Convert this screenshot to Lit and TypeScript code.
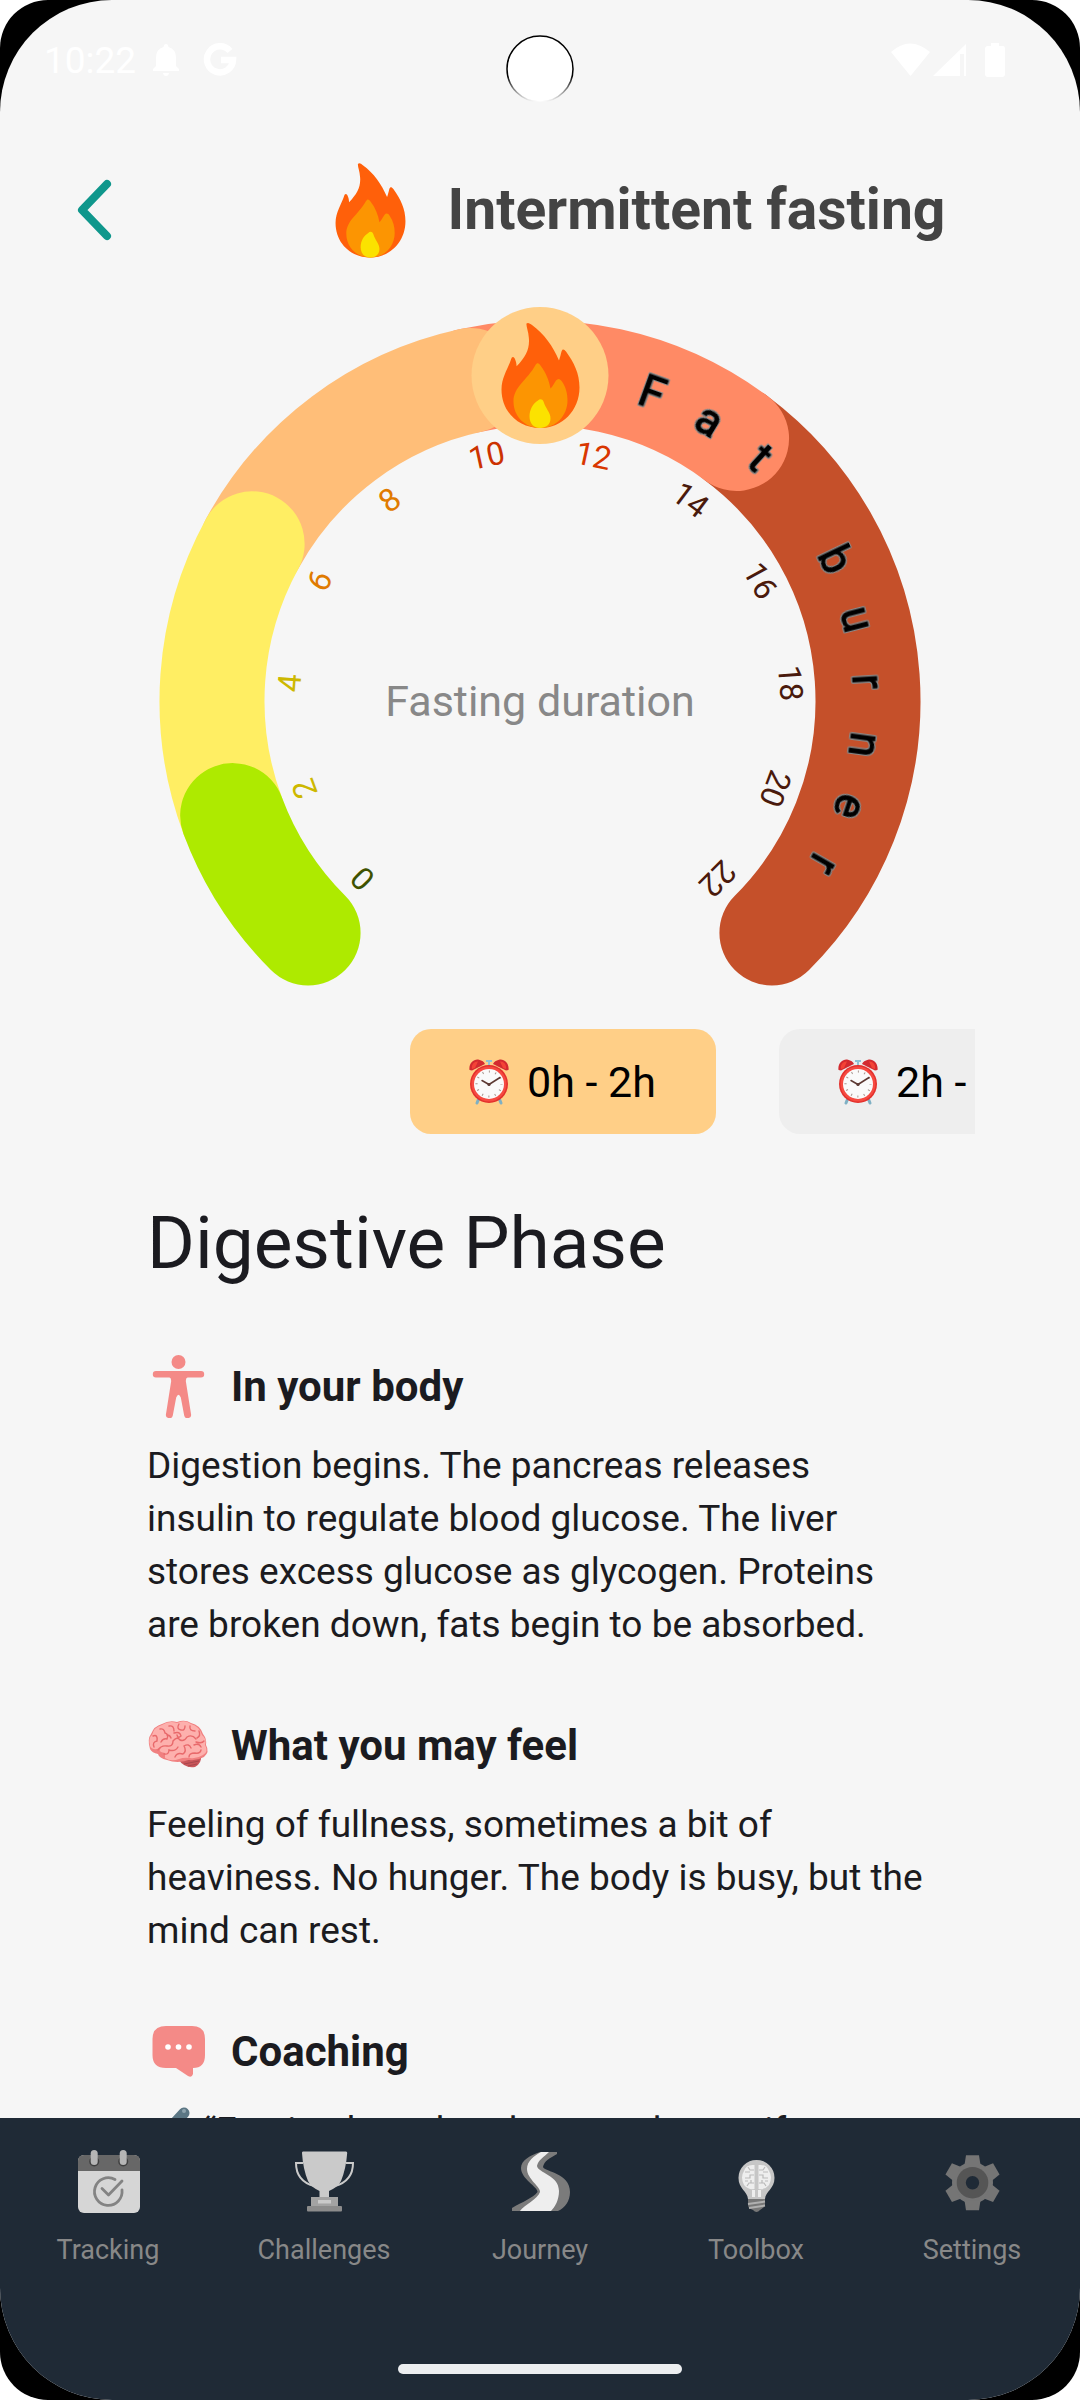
// path: ./app.ts
import { html, svg, css, LitElement } from "lit";
import { customElement, property, state } from "lit/decorators.js";
import { classMap } from "lit/directives/class-map.js";

const CX = 435;
const CY = 401;
const RADIUS = 328;
const START_ANGLE = -135;
const DEG_PER_HOUR = 270 / 22;

const PHASES = [
  { from: 0, to: 2, color: "#aeea00" },
  { from: 2, to: 6, color: "#ffee63" },
  { from: 6, to: 10, color: "#ffbe78" },
  { from: 10, to: 14, color: "#ff8a65" },
  { from: 14, to: 22, color: "#c5502a" },
];

const HOURS = [
  { hour: 0, color: "#3f5200" },
  { hour: 2, color: "#cdb800" },
  { hour: 4, color: "#cdb800" },
  { hour: 6, color: "#e07b00" },
  { hour: 8, color: "#e07b00" },
  { hour: 10, color: "#cc3200" },
  { hour: 12, color: "#d93600" },
  { hour: 14, color: "#4a1a0c" },
  { hour: 16, color: "#4a1a0c" },
  { hour: 18, color: "#4a1a0c" },
  { hour: 20, color: "#4a1a0c" },
  { hour: 22, color: "#4a1a0c" },
];

const SECTIONS = [
  {
    icon: "body",
    title: "In your body",
    text: "Digestion begins. The pancreas releases\ninsulin to regulate blood glucose. The liver\nstores excess glucose as glycogen. Proteins\nare broken down, fats begin to be absorbed.",
  },
  {
    icon: "brain",
    title: "What you may feel",
    text: "Feeling of fullness, sometimes a bit of\nheaviness. No hunger. The body is busy, but the\nmind can rest.",
  },
];

const TABS = ["Tracking", "Challenges", "Journey", "Toolbox", "Settings"];

// angle is in degrees, clockwise from 12 o'clock
const polar = (angle: number, r: number) => {
  const rad = (angle * Math.PI) / 180;
  return { x: CX + r * Math.sin(rad), y: CY - r * Math.cos(rad) };
};

const hourAngle = (hour: number) => START_ANGLE + hour * DEG_PER_HOUR;

const flame = svg`
  <path fill="#ff600a" d="M25.5 1 C27 -.5 29 1 31 2.500 C43 11 52 24 58 38 C59 35 60 31 60.500 29 C61.500 26 63 26.500 65 29 C73 40 78.500 51 78.500 65 C78.500 88 61 105.500 39.500 105.500 C17 105.500 .5 89 .5 67 C.5 55 7 46 10 37 C11 33 13.500 34 14.500 38 C15.300 40 15.500 42 15.600 43.800 C25 34 29 26 27.800 15 C27.500 9 25 4 25.500 1Z"/>
  <path fill="#fc9502" d="M34.500 42.500 C36 40 37.500 40 39.500 43 C45 50 48 58 49.500 66 C51.500 64.500 53 61 55 58 C57 55.500 59 56 61 59 C65 65 66.500 71 66.500 78 C66.500 93 55 105.500 39.500 105.500 C24 105.500 12.500 94 12.500 79 C12.500 64 26 58 34.500 42.500Z"/>
  <path fill="#fbe200" d="M37 78 C39 76 41.500 76.500 42.500 79 C44.500 86 49.500 90 49.500 96 C49.500 102 45 105.500 39 105.500 C33 105.500 28.500 101 28.500 94 C28.500 87 32 81 37 78Z"/>
`;

const alarmClock = html`
  <svg class="clock" viewBox="0 0 40 46" aria-hidden="true">
    <path stroke="#7fb0c4" stroke-width="3" stroke-linecap="round" d="M10 39 L8 44 M30 39 L32 44"/>
    <path fill="#8fc3d4" d="M17 1 H23 V3 H21 V7 H19 V3 H17Z"/>
    <path fill="#d32a2f" d="M.5 11 C-.5 4 5 -.5 10 .7 C13 1.300 15 3 16 5 L3 11.500Z M39.500 11 C40.500 4 35 -.5 30 .7 C27 1.300 25 3 24 5 L37 11.500Z"/>
    <path fill="#f44336" d="M3 10 C2 5 6 2 9 2.500 L6 9Z M37 10 C38 5 34 2 31 2.500 L34 9Z"/>
    <circle cx="20" cy="25" r="19" fill="#e3302c"/>
    <circle cx="20" cy="25" r="17.500" fill="#f64a41"/>
    <circle cx="20" cy="25" r="15" fill="#fafafa"/>
    <circle cx="20" cy="25" r="12.500" fill="none" stroke="#a5958e" stroke-width="2.200" stroke-dasharray="1 5.545" stroke-dashoffset=".5"/>
    <path fill="none" stroke="#5d3a34" stroke-width="1.500" stroke-linecap="round" d="M13 21.500 L20 25.500 L31 18.500"/>
    <circle cx="20" cy="25.500" r="1.600" fill="#5d3a34"/>
  </svg>
`;

const sectionIcons: Record<string, unknown> = {
  body: svg`
    <g fill="#f48a87">
      <circle cx="31.500" cy="7" r="7"/>
      <path d="M9 16 H54 A3.200 3.200 0 0 1 54 22.400 H40.500 Q38.800 22.800 38.800 26 L44 59 A3.400 3.400 0 0 1 37.200 60.500 L33.800 42.500 Q31.500 37 29.200 42.500 L25.800 60.500 A3.400 3.400 0 0 1 19 59 L24.200 26 Q24.200 22.800 22.500 22.400 H9 A3.200 3.200 0 0 1 9 16Z"/>
    </g>
  `,
  brain: svg`
    <path fill="#c9555a" d="M31 45 L54 42 Q55 49 48 53 Q38 55 31 45Z"/>
    <path fill="none" stroke="#a8474d" d="M34 47 L53 44 M37 50 L52 47 M41 52 L50 50"/>
    <path fill="#f08080" d="M3 35 Q0 25 4 20 Q7 12 15 10 Q22 6 30 8 Q38 5 44 9 Q53 11 56 20 Q60 25 59 31 Q63 38 57 43 Q50 47 42 46 Q30 50 20 46 Q12 44 11 40 Q5 39 3 35Z"/>
    <path fill="#fdb0ad" d="M3 32 Q1 24 5 21 Q7 13 15 11 Q22 6 30 9 Q38 5 44 10 Q52 12 55 21 Q60 25 58 31 Q62 38 56 41 Q50 45 43 44 Q37 43 32 45 Q24 48 18 44 L18 39 Q10 38 14 34 Q5 37 3 32Z"/>
    <g fill="none" stroke="#e8696b" stroke-width="1.400" stroke-linecap="round">
      <path d="M6 22 Q11 20 10 27 Q5 28 7 33 M13 15 Q17 14 18 19 Q22 20 20 25 Q16 24 14 28 M22 12 Q27 11 27 17 M32 10 Q29 15 34 16 Q38 17 38 12 M43 12 Q42 17 48 17 M52 17 Q54 22 50 24"/>
      <path d="M11 36 Q14 31 20 32 Q26 33 26 27 Q30 22 33 26 Q37 28 40 23 Q45 20 49 25 M27 19 Q33 17 34 22 Q31 25 30 21 M17 40 Q22 41 22 36 Q28 38 31 33 M28 43 Q30 38 36 40 Q40 37 37 32 Q42 29 44 34 M42 43 Q42 39 48 39 Q53 40 54 36 M47 31 Q52 29 54 33 M49 28 Q55 30 57 27 M24 24 Q23 21 20 21"/>
    </g>
  `,
  chat: svg`
    <path fill="#f48a87" d="M19 6 H45 Q58 6 58 19 V35 Q58 48 46 48 V54 Q45 58 41 56 L29 48 H19 Q5.500 48 5.500 35 V19 Q5.500 6 19 6Z"/>
    <g fill="#fff"><circle cx="21" cy="27" r="2.800"/><circle cx="31.500" cy="27" r="2.800"/><circle cx="42" cy="27" r="2.800"/></g>
  `,
};

const tabIcons: Record<string, unknown> = {
  Tracking: svg`
    <rect x="6" y="10" width="62" height="58" rx="6" fill="#d6d6d6"/>
    <path fill="#676767" d="M6 26 V16 Q6 10 12 10 H62 Q68 10 68 16 V26Z"/>
    <g fill="#3f3f3f"><circle cx="22.200" cy="16.500" r="5"/><circle cx="51.200" cy="16.500" r="5"/></g>
    <g fill="#b5b5b5"><rect x="18.700" y="5" width="7" height="15" rx="3.500"/><rect x="47.700" y="5" width="7" height="15" rx="3.500"/></g>
    <g fill="none" stroke="#838383" stroke-width="2.800" stroke-linecap="round" stroke-linejoin="round">
      <path d="M43 34.500 A13.800 13.800 0 1 0 50 45"/>
      <path d="M30 43.500 L36.500 50 L50 36"/>
    </g>
  `,
  Challenges: svg`
    <path fill="none" stroke="#cacaca" stroke-width="2" d="M15 18 H8 Q8 36 26 41 M58 18 H65 Q65 36 47 41"/>
    <path fill="#cacaca" d="M15 6.500 H58 Q59.300 6.500 59.200 8 Q58 24 53 36 Q50 42 41 46 V53 H31.500 V46 Q23 42 20 36 Q15 24 14 8 Q13.800 6.500 15 6.500Z"/>
    <rect x="23" y="52" width="27" height="10" fill="#a3a3a3"/>
    <rect x="30" y="55" width="13" height="3.500" fill="#cacaca"/>
    <rect x="19" y="61" width="35" height="5.500" rx="1" fill="#8c8c8c"/>
  `,
  Journey: svg`
    <path fill="#7b7b7b" d="M36 7 H53 V9 C46 13 40 16 39 22 C41 27 66 28 66 47 C66 56 61 63 54 66 H8 V63 C18 57 29 53 33.500 47 C34 42 17 34 17 23 C17 15 27 10 36 7Z"/>
    <path fill="#eee" d="M37 7 H45 C40 12 34 15 33 21 C34 28 55 30 55 46 C55 55 51 62 47 66 H16 C20 60 34 54 36 47 C37 42 23 34 23 24 C23 16 30 11 37 7Z"/>
  `,
  Toolbox: svg`
    <path fill="#c6c6c6" d="M36.500 15 A17.800 17.800 0 0 1 54.500 33 C54.500 44 45.500 46 45 54 H28 C27.500 46 18.500 44 18.500 33 A17.800 17.800 0 0 1 36.500 15Z"/>
    <path fill="#eee" d="M34.500 20 Q26 19 24 26 Q20 32 24 40 Q28 45 34.500 44Z M38.500 20 Q47 19 49 26 Q53 32 49 40 Q45 45 38.500 44Z M32 45 H35 V52 H32Z M38 45 H41 V52 H38Z"/>
    <path fill="none" stroke="#b9b9b9" stroke-width="1.200" d="M34 25 H30 L28 22 M34 30 H30 V33 H25 M30 27 H25 M34 38 H29 L27 41 M31 38 V35 M25 36 H28 M39 25 H43 L45 22 M39 30 H43 V33 H48 M43 27 H48 M39 38 H44 L46 41 M42 38 V35 M48 36 H45"/>
    <path fill="#777" d="M28 54 H45 V61 Q42 64 40 65 Q36.500 69 33 65 Q28 63 28 60Z"/>
    <path stroke="#b0b0b0" stroke-width="2" d="M28 59 L45 56.500 M29 63 L45 60.500"/>
  `,
  Settings: svg`
    <g fill="#757575">
      <circle cx="36.500" cy="37.700" r="20.500"/>
      ${[0, 60, 120, 180, 240, 300].map(
        (a) => svg`<path transform="rotate(${a} 36.500 37.700)" d="M30 10.200 H43 L44.500 20 H28.500Z"/>`
      )}
    </g>
    <circle cx="36.500" cy="37.700" r="15.800" fill="#555"/>
    <circle cx="36.500" cy="37.700" r="6.700" fill="#1f2a36"/>
  `,
};

@customElement("fasting-gauge")
class FastingGauge extends LitElement {
  @property() caption = "";
  @property() word = "";

  static styles = css`
    :host {
      display: block;
    }

    svg {
      display: block;
      width: 100%;
    }

    text {
      font-family: Roboto, "Liberation Sans", sans-serif;
      text-anchor: middle;
    }

    .arc {
      fill: none;
      stroke-width: 105px;
      stroke-linecap: round;
    }

    .hour {
      font-size: 32px;
    }

    .letter {
      font-size: 44px;
      fill: #000;
      stroke: #000;
      stroke-width: 1px;
      filter: drop-shadow(1px 0 0 #888) drop-shadow(-1px 0 0 #888)
        drop-shadow(0 1px 0 #888) drop-shadow(0 -1px 0 #888);
    }

    .caption {
      font-size: 43px;
      fill: #888;
    }
  `;

  private renderArc(phase: (typeof PHASES)[number]) {
    const a = polar(hourAngle(phase.from), RADIUS);
    const b = polar(hourAngle(phase.to), RADIUS);
    return svg`<path class="arc" stroke=${phase.color} d="M${a.x} ${a.y} A${RADIUS} ${RADIUS} 0 0 1 ${b.x} ${b.y}"/>`;
  }

  private renderText(cls: string, text: string, angle: number, r: number, color?: string) {
    const p = polar(angle, r);
    return svg`<text class=${cls} x=${p.x} y=${p.y} fill=${color ?? "#000"} transform="rotate(${angle} ${p.x} ${p.y})">${text}</text>`;
  }

  render() {
    return html`
      <svg viewBox="0 0 870 690" role="img" aria-label=${this.caption}>
        ${[...PHASES].reverse().map((p) => this.renderArc(p))}
        ${HOURS.map((h) => this.renderText("hour", String(h.hour), hourAngle(h.hour), 240, h.color))}
        ${[...this.word].map((c, i) => this.renderText("letter", c, 20 + i * 11.1, 313))}
        <circle cx=${CX} cy="75.500" r="68.500" fill="#ffcf87" />
        <g transform="translate(396 22.500)">${flame}</g>
        <text class="caption" x=${CX} y="416">${this.caption}</text>
      </svg>
    `;
  }
}

@customElement("app-root")
class AppRoot extends LitElement {
  @state() private range = 0;

  static styles = css`
    :host {
      display: block;
      height: 100vh;
      background: #fff;
      font-family: Roboto, "Liberation Sans", sans-serif;
      color: #1b1b20;
    }

    * {
      box-sizing: border-box;
    }

    button {
      border: 0;
      background: none;
      font: inherit;
      color: inherit;
      cursor: pointer;
    }

    h1,
    h2,
    h3,
    p {
      margin: 0;
    }

    svg {
      display: block;
      flex: none;
    }

    /* device frame */

    .device {
      height: 100%;
      background: #000;
      border-radius: 48px;
      overflow: hidden;
    }

    .screen {
      position: relative;
      display: flex;
      flex-direction: column;
      height: 100%;
      background: #f6f6f6;
      border-radius: 112px;
      overflow: hidden;
    }

    .camera {
      position: absolute;
      top: 35px;
      left: 50%;
      width: 68px;
      height: 68px;
      margin-left: -34px;
    }

    .status {
      display: flex;
      flex: none;
      align-items: center;
      gap: 16px;
      height: 120px;
      padding: 0 74px 0 44px;
      color: #fff;
      font-size: 37px;
    }

    .status .spacer {
      flex: 1;
    }

    .status .signals {
      width: 116px;
      height: 36px;
    }

    /* header */

    header {
      display: flex;
      flex: none;
      align-items: center;
      height: 180px;
    }

    .back {
      width: 200px;
      padding: 20px 0 20px 76px;
    }

    .title {
      display: flex;
      flex: 1;
      align-items: center;
      justify-content: center;
      gap: 42px;
      color: #444;
    }

    h1 {
      font-size: 57px;
      line-height: 68px;
      font-weight: 700;
    }

    /* content */

    main {
      flex: 1;
      min-height: 0;
      padding: 0 105px;
      overflow: hidden;
    }

    .ranges {
      display: flex;
      gap: 63px;
      margin-top: 39px;
      padding-left: 35%;
      overflow: hidden;
    }

    .range {
      display: flex;
      flex: none;
      align-items: center;
      justify-content: center;
      gap: 18px;
      min-width: 306px;
      height: 105px;
      border-radius: 21px;
      background: #eee;
      color: #000;
      font-size: 43px;
      white-space: nowrap;
    }

    .range.active {
      background: #ffcf87;
    }

    .clock {
      width: 40px;
      height: 46px;
    }

    article {
      display: flex;
      flex-direction: column;
      gap: 63px;
      margin-top: 60px;
      padding: 0 42px;
    }

    h2 {
      font-size: 73px;
      line-height: 98px;
      font-weight: 400;
    }

    .section-head {
      display: flex;
      align-items: center;
      gap: 21px;
      margin-bottom: 21px;
    }

    h3 {
      font-size: 42px;
      line-height: 63px;
      font-weight: 700;
    }

    p {
      font-size: 37px;
      line-height: 53px;
      white-space: pre-line;
    }

    .pen {
      display: inline-block;
      vertical-align: -6px;
      margin-right: 12px;
    }

    /* bottom navigation */

    nav {
      display: flex;
      flex: none;
      flex-direction: column;
      justify-content: space-between;
      align-items: center;
      height: 282px;
      padding: 27px 0 26px;
      background: #1f2a36;
    }

    .tabs {
      display: grid;
      grid-template-columns: repeat(5, 1fr);
      width: 100%;
    }

    .tab {
      display: flex;
      flex-direction: column;
      align-items: center;
      gap: 17px;
      padding: 0;
      color: #888;
      font-size: 27px;
      line-height: 32px;
    }

    .home {
      width: 284px;
      height: 10px;
      border-radius: 5px;
      background: #eceef0;
    }
  `;

  private renderSectionHead(icon: string, title: string) {
    return html`
      <div class="section-head">
        <svg width="63" height="63" viewBox="0 0 63 63" aria-hidden="true">${sectionIcons[icon]}</svg>
        <h3>${title}</h3>
      </div>
    `;
  }

  render() {
    return html`
      <div class="device">
        <div class="screen">
          <div class="status">
            <span>10:22</span>
            <svg width="28" height="32" viewBox="1 0 28 32" fill="#fff" aria-hidden="true">
              <path d="M15 0 Q17 0 17.500 3 Q25 5 25 14 V22 L28 25 V27 H2 V25 L5 22 V14 Q5 5 12.500 3 Q13 0 15 0Z M12 29 H18 Q17.500 32 15 32 Q12.500 32 12 29Z"/>
            </svg>
            <svg width="44" height="34" viewBox="-8 0 44 34" aria-hidden="true">
              <path fill="none" stroke="#fff" stroke-width="6.500" d="M26 8 A13 13 0 1 0 29 17 H17"/>
            </svg>
            <span class="spacer"></span>
            <svg class="signals" viewBox="0 0 116 36" fill="#fff" aria-hidden="true">
              <path d="M1 10 Q20 -7 40 10 L20.500 34Z"/>
              <path d="M43 34 L76 2 V34 H74 V12 H70 V34Z"/>
              <path d="M101 1 H109 V4 H113 Q115 4 115 7 V32 Q115 35 112 35 H98 Q95 35 95 32 V7 Q95 4 98 4 H101Z"/>
            </svg>
          </div>

          <header>
            <button class="back" aria-label="Back">
              <svg width="36" height="62" viewBox="0 0 36 62">
                <path fill="none" stroke="#0f978c" stroke-width="8" stroke-linecap="round" stroke-linejoin="round" d="M31 5 L6 31 L31 57"/>
              </svg>
            </button>
            <div class="title">
              <svg width="71" height="95" viewBox="0 0 79 106" aria-hidden="true">${flame}</svg>
              <h1>Intermittent fasting</h1>
            </div>
          </header>

          <main>
            <fasting-gauge caption="Fasting duration" word="Fat burner"></fasting-gauge>

            <div class="ranges">
              ${["0h - 2h", "2h - 6h"].map(
                (label, i) => html`
                  <button
                    class=${classMap({ range: true, active: this.range === i })}
                    @click=${() => (this.range = i)}
                  >
                    ${alarmClock}<span>${label}</span>
                  </button>
                `
              )}
            </div>

            <article>
              <h2>Digestive Phase</h2>
              ${SECTIONS.map(
                (s) => html`
                  <section>
                    ${this.renderSectionHead(s.icon, s.title)}
                    <p>${s.text}</p>
                  </section>
                `
              )}
              <section>
                ${this.renderSectionHead("chat", "Coaching")}
                <p><svg class="pen" width="44" height="44" viewBox="0 0 44 44" aria-hidden="true">
                    <path stroke="#5b7684" stroke-width="11" stroke-linecap="round" d="M37 8 L14 33"/>
                    <circle cx="37" cy="6" r="2" fill="#8fa5b0"/></svg>“Fasting has already started, even if</p>
              </section>
            </article>
          </main>

          <nav>
            <div class="tabs">
              ${TABS.map(
                (tab) => html`
                  <button class="tab">
                    <svg width="72" height="72" viewBox="0 0 72 72" aria-hidden="true">${tabIcons[tab]}</svg>
                    <span>${tab}</span>
                  </button>
                `
              )}
            </div>
            <div class="home"></div>
          </nav>

          <svg class="camera" viewBox="0 0 68 68" aria-hidden="true">
            <defs>
              <linearGradient id="rim" x1="0" y1="0" x2="0" y2="1">
                <stop offset="0" stop-color="#000"/>
                <stop offset=".6" stop-color="#000"/>
                <stop offset="1" stop-color="#000" stop-opacity="0"/>
              </linearGradient>
            </defs>
            <circle cx="34" cy="34" r="33" fill="#fff" stroke="url(#rim)" stroke-width="1.500"/>
          </svg>
        </div>
      </div>
    `;
  }
}
